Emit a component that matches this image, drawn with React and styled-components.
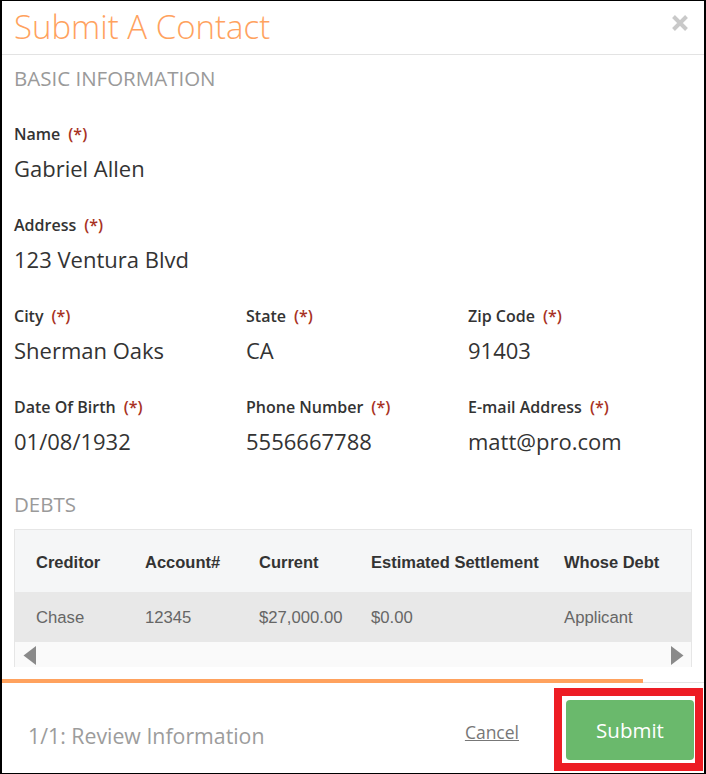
import React from 'react';
import styled, { createGlobalStyle } from 'styled-components';

const GlobalStyle = createGlobalStyle`
  html, body {
    margin: 0;
    padding: 0;
    background: #fff;
  }
  * {
    box-sizing: border-box;
  }
`;

const basicFields = [
  [{ label: 'Name', value: 'Gabriel Allen' }],
  [{ label: 'Address', value: '123 Ventura Blvd' }],
  [
    { label: 'City', value: 'Sherman Oaks' },
    { label: 'State', value: 'CA' },
    { label: 'Zip Code', value: '91403' }
  ],
  [
    { label: 'Date Of Birth', value: '01/08/1932' },
    { label: 'Phone Number', value: '5556667788' },
    { label: 'E-mail Address', value: 'matt@pro.com' }
  ]
];

const debtColumns = ['Creditor', 'Account#', 'Current', 'Estimated Settlement', 'Whose Debt'];
const debts = [['Chase', '12345', '$27,000.00', '$0.00', 'Applicant']];

const App = () => {
  return (
    <>
      <GlobalStyle />
      <Dialog>
        <Header>
          <Title>Submit A Contact</Title>
          <CloseButton aria-label="Close">
            <svg width="18" height="18" viewBox="0 0 18 18">
              <path d="M2.5 2.5 L15.5 15.5 M15.5 2.5 L2.5 15.5" stroke="#c9c9c9" strokeWidth="4" strokeLinecap="butt" />
            </svg>
          </CloseButton>
        </Header>

        <Body>
          <SectionTitle>Basic Information</SectionTitle>
          {basicFields.map((row, i) => (
            <FieldRow key={i}>
              {row.map((f) => (
                <Field key={f.label}>
                  <Label>
                    {f.label}
                    <Required>(*)</Required>
                  </Label>
                  <Value>{f.value}</Value>
                </Field>
              ))}
            </FieldRow>
          ))}

          <SectionTitle $top={37}>Debts</SectionTitle>
          <TableBox>
            <Grid $head>
              {debtColumns.map((c) => (
                <HeadCell key={c}>{c}</HeadCell>
              ))}
            </Grid>
            {debts.map((row, i) => (
              <Grid key={i}>
                {row.map((cell, j) => (
                  <Cell key={j}>{cell}</Cell>
                ))}
              </Grid>
            ))}
            <ScrollBar>
              <svg width="13" height="19" viewBox="0 0 13 19">
                <path d="M13 0 L13 19 L0.5 9.5 Z" fill="#8a8a8a" />
              </svg>
              <svg width="13" height="19" viewBox="0 0 13 19">
                <path d="M0 0 L0 19 L12.5 9.5 Z" fill="#8a8a8a" />
              </svg>
            </ScrollBar>
          </TableBox>
        </Body>

        <Progress>
          <ProgressFill style={{ width: '641px' }} />
          <ProgressRest />
        </Progress>

        <Footer>
          <StepText>1/1: Review Information</StepText>
          <CancelLink href="#">Cancel</CancelLink>
          <SubmitWrap>
            <SubmitButton>Submit</SubmitButton>
            <Highlight />
          </SubmitWrap>
        </Footer>
      </Dialog>
    </>
  );
};

const Dialog = styled.div`
  width: 706px;
  height: 774px;
  border: 1px solid #000;
  border-left-width: 2px;
  border-right-width: 2px;
  background: #fff;
  display: flex;
  flex-direction: column;
  font-family: 'Open Sans', 'Liberation Sans', sans-serif;
  color: #333;
  overflow: hidden;
`;

const Header = styled.div`
  height: 54px;
  flex-shrink: 0;
  display: flex;
  align-items: center;
  justify-content: space-between;
  padding: 0 15px 0 12px;
  border-bottom: 1px solid #e3e3e3;
`;

const Title = styled.h1`
  margin: 0;
  font-size: 33px;
  font-weight: 300;
  color: #ffa25e;
  line-height: 1;
  margin-top: -2px;
`;

const CloseButton = styled.button`
  border: 0;
  background: none;
  padding: 0;
  display: flex;
  align-self: flex-start;
  margin-top: 13px;
  cursor: pointer;
`;

const Body = styled.div`
  padding: 0 12px;
`;

const SectionTitle = styled.h2`
  margin: ${(p) => p.$top || 11}px 0 0;
  font-size: 20.5px;
  font-weight: 400;
  line-height: 24px;
  color: #9a9a9a;
  text-transform: uppercase;
`;

const FieldRow = styled.div`
  display: grid;
  grid-template-columns: 232px 222px 1fr;
  margin-top: 34px;
  & + & {
    margin-top: 33px;
  }
`;

const Field = styled.div`
  display: flex;
  flex-direction: column;
  gap: 10px;
`;

const Label = styled.div`
  font-size: 16px;
  font-weight: 600;
  line-height: 20px;
  color: #333;
`;

const Required = styled.span`
  color: #a83224;
  margin-left: 8px;
`;

const Value = styled.div`
  font-size: 22px;
  line-height: 28px;
  color: #333;
`;

const TableBox = styled.div`
  margin-top: 13px;
  border: 1px solid #e6e6e6;
  border-bottom: 0;
  font-family: 'Liberation Sans', Arial, sans-serif;
`;

const Grid = styled.div`
  display: grid;
  grid-template-columns: 109px 114px 112px 193px 1fr;
  align-items: center;
  padding-left: 21px;
  padding-top: 2px;
  height: ${(p) => (p.$head ? 62 : 50)}px;
  background: ${(p) => (p.$head ? '#f5f6f7' : '#e8e8e8')};
`;

const HeadCell = styled.div`
  font-size: 16.5px;
  font-weight: 700;
  color: #333;
  white-space: nowrap;
`;

const Cell = styled.div`
  font-size: 16.7px;
  color: #666;
  white-space: nowrap;
`;

const ScrollBar = styled.div`
  height: 25px;
  background: #fafafa;
  display: flex;
  align-items: center;
  justify-content: space-between;
  padding: 2px 7px 0 8px;
`;

const Progress = styled.div`
  margin-top: 12px;
  height: 4px;
  display: flex;
  align-items: flex-end;
  flex-shrink: 0;
`;

const ProgressFill = styled.div`
  height: 4px;
  background: #ffa25e;
`;

const ProgressRest = styled.div`
  flex: 1;
  height: 1px;
  background: #e3e3e3;
`;

const Footer = styled.div`
  flex: 1;
  display: flex;
  align-items: flex-start;
  padding: 17px 10px 0 26px;
`;

const StepText = styled.div`
  flex: 1;
  font-size: 21.3px;
  color: #9c9c9c;
  line-height: 28px;
  margin-top: 22px;
`;

const CancelLink = styled.a`
  font-size: 17.5px;
  color: #777;
  text-decoration: underline;
  line-height: 24px;
  margin-top: 20px;
  margin-right: 47px;
`;

const SubmitWrap = styled.div`
  position: relative;
`;

const SubmitButton = styled.button`
  width: 128px;
  height: 60px;
  border: 0;
  border-radius: 4px;
  background: #6ab96c;
  color: #fff;
  font-family: 'Open Sans', 'Liberation Sans', sans-serif;
  font-size: 20.5px;
  cursor: pointer;
`;

const Highlight = styled.div`
  position: absolute;
  top: -12px;
  left: -12px;
  right: -9px;
  bottom: -11px;
  border: 8px solid #ed1c24;
  pointer-events: none;
`;

export default App;
